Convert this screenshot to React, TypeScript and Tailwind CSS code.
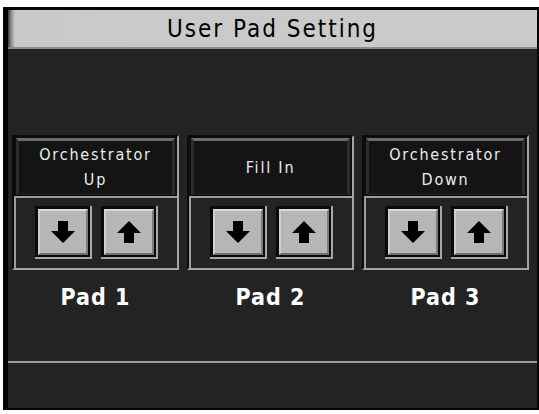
import React from 'react';

const PADS = [
  { name: ['Orchestrator', 'Up'], label: 'Pad 1' },
  { name: ['Fill In'], label: 'Pad 2' },
  { name: ['Orchestrator', 'Down'], label: 'Pad 3' },
];

const FONT = "font-['DejaVu_Sans_Condensed','DejaVu_Sans',sans-serif]";

function Arrow({ up }: { up?: boolean }) {
  return (
    <svg width="24" height="22" viewBox="0 0 24 22" className={up ? 'rotate-180' : ''}>
      <polygon points="7,0 17,0 17,10 24,10 12,22 0,10 7,10" fill="#000" />
    </svg>
  );
}

function ArrowButton({ up }: { up?: boolean }) {
  return (
    <div className="border-r-2 border-b-2 border-[#a8a8a8] bg-[#0a0a0a] p-[3px] pr-[2px] pb-[2px]">
      <div className="flex h-[46px] w-[50px] items-center justify-center border-2 border-t-[#dadada] border-l-[#cfcfcf] border-r-[#7c7c7c] border-b-[#6e6e6e] bg-[#b6b6b6]">
        <Arrow up={up} />
      </div>
    </div>
  );
}

function PadGroup({ name, label }: { name: string[]; label: string }) {
  return (
    <div className="flex w-[167px] flex-col items-center">
      <div className="flex h-[135px] w-full flex-col border-t-2 border-l-2 border-t-[#0c0c0c] border-l-[#0c0c0c] border-r-2 border-b-2 border-r-[#a4a4a4] border-b-[#a4a4a4] bg-[#0e0e0e]">
        <div className="mx-[2px] mt-[1px] flex h-[57px] flex-col items-center justify-center border-t-[3px] border-t-[#6c6c6c] border-x-[3px] border-x-[#2c2c2c] border-b-[2px] border-b-[#1c1c1c] bg-[#141414] text-[16px] leading-[25px] tracking-[1.8px] text-[#ececec]">
          {name.map((n) => (
            <span key={n}>{n}</span>
          ))}
        </div>
        <div className="mt-[1px] flex flex-1 items-start justify-center gap-[9px] border-t-2 border-l-2 border-[#9c9c9c] bg-[#232323] pt-[8px]">
          <ArrowButton />
          <ArrowButton up />
        </div>
      </div>
      <div className="mt-[13px] text-[23px] font-bold leading-[28px] tracking-[1px] text-white">{label}</div>
    </div>
  );
}

export default function App() {
  return (
    <div className={`h-[414px] w-[539px] bg-white pl-[3px] pt-[7px] ${FONT}`}>
      <div className="flex h-[403px] w-[536px] flex-col border-t-[3px] border-l-[5px] border-r-[2px] border-b-[2px] border-[#050505] bg-[#232323]">
        <div className="flex h-[39px] items-center justify-center border-b-2 border-[#8c8c8c] bg-[linear-gradient(to_right,#3a3a3a_0px,#8a8a8a_3px,#c9c9c9_7px,#cacaca_100%)] text-[24px] tracking-[2px] text-black">
          User Pad Setting
        </div>
        <div className="flex flex-1 flex-col">
          <div className="flex gap-[8px] px-[4px] pt-[86px]">
            {PADS.map((p) => (
              <PadGroup key={p.label} name={p.name} label={p.label} />
            ))}
          </div>
          <div className="flex-1" />
          <div className="h-[47px] border-t-2 border-[#9a9a9a]" />
        </div>
      </div>
    </div>
  );
}
